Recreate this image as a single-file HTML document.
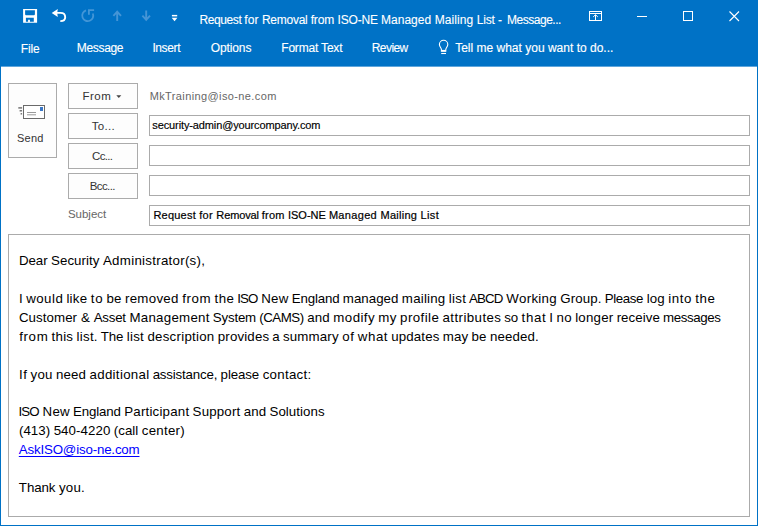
<!DOCTYPE html>
<html><head><meta charset="utf-8">
<title>Request for Removal from ISO-NE Managed Mailing List - Message</title>
<style>
html,body{margin:0;padding:0;}
body{width:758px;height:526px;overflow:hidden;background:#0072c6;position:relative;font-family:"Liberation Sans",sans-serif;}
.abs{position:absolute;}
#content{left:1px;top:67px;width:756px;height:458px;background:#fff;}
#edge{left:1px;top:66px;width:756px;height:1px;background:#5fa6dc;}
.t{position:absolute;white-space:nowrap;line-height:1;}
.btn{position:absolute;box-sizing:border-box;border:1px solid #ababab;background:#fdfdfd;}
.fld{position:absolute;box-sizing:border-box;border:1px solid #ababab;background:#fff;left:149px;width:601px;height:21px;}
</style></head><body>
<svg class="abs" style="left:0;top:0" width="758" height="66">
  <!-- save icon -->
  <path fill="#fff" fill-rule="evenodd" d="M23.100 9 H37.100 V22.700 H23.100 Z M25.100 10.200 H34.900 V14.500 L34.200 15.300 H25.800 L25.100 14.500 Z M25.900 17.800 H33.800 V21.800 H29.900 V19.700 H28.100 V21.800 H25.900 Z"/>
  <!-- undo -->
  <path d="M51.700 12.900 L57.800 8.900 L57.200 12.900 L57.800 16.900 Z" fill="#fff"/>
  <path d="M56.500 12.900 H60.500 C63.500 12.900 65.200 14.800 65.200 17.200 C65.200 19.600 63.200 21.100 60.300 21.100" fill="none" stroke="#fff" stroke-width="1.900"/>
  <!-- redo disabled -->
  <g fill="none" stroke="#4396d7" stroke-width="1.800">
    <path d="M86 10.400 A5.5 5.5 0 1 0 92.800 13.500"/>
    <path d="M88.900 14.800 V10.100 H94.100"/>
  </g>
  <!-- up / down arrows disabled -->
  <g fill="none" stroke="#4595d6" stroke-width="1.900">
    <path d="M117.2 21 V11.8 M113.4 15.8 L117.2 11.7 L121 15.8"/>
    <path d="M146.2 10.5 V19.700 M142.400 15.700 L146.2 19.800 L150 15.700"/>
  </g>
  <!-- customize -->
  <g fill="#fff">
    <rect x="171.9" y="14.9" width="5.3" height="1.5"/>
    <path d="M171.700 17.800 H177.400 L174.550 21.2 Z"/>
  </g>
  <!-- ribbon display icon -->
  <g fill="none" stroke="#fff" stroke-width="1">
    <rect x="589.5" y="11.5" width="12" height="9"/>
    <line x1="589.5" y1="13.5" x2="601.5" y2="13.5"/>
    <path d="M595.5 20.500 V15 M593.2 16.900 L595.5 14.700 L597.800 16.900"/>
  </g>
  <line x1="637" y1="16.5" x2="647" y2="16.5" stroke="#fff" stroke-width="1"/>
  <rect x="683.5" y="11.5" width="9" height="9" fill="none" stroke="#fff" stroke-width="1"/>
  <path d="M729.5 11.5 L739 21 M739 11.5 L729.5 21" stroke="#fff" stroke-width="1.100" fill="none"/>
  <!-- bulb -->
  <g fill="none" stroke="#fff" stroke-width="1.100">
    <path d="M441.400 51.2 V49.5 C441.400 48 439.400 46.800 439.400 44.5 A4.2 4.2 0 0 1 447.800 44.5 C447.800 46.800 445.800 48 445.800 49.500 V51.200 Z"/>
    <path d="M441.400 50.700 H445.800" stroke-width="1.600"/>
    <line x1="441.2" y1="53.500" x2="446" y2="53.500"/>
  </g>
</svg>
<div id="edge" class="abs"></div>
<div id="content" class="abs"></div>

<!-- Send button -->
<div class="btn" style="left:8px;top:83px;width:49px;height:75px;"></div>
<svg class="abs" style="left:8px;top:83px" width="49" height="75">
  <rect x="15.500" y="22.5" width="21" height="13" fill="#fff" stroke="#6a6a6a" stroke-width="1"/>
  <rect x="32" y="24" width="3" height="4" fill="#3a77c6"/>
  <line x1="19" y1="29.500" x2="28" y2="29.500" stroke="#9a9a9a"/>
  <line x1="19" y1="31.800" x2="28" y2="31.800" stroke="#9a9a9a"/>
  <line x1="10.300" y1="24.900" x2="14.100" y2="24.900" stroke="#6a6a6a" stroke-width="1.400"/>
  <line x1="11.600" y1="27.800" x2="14.100" y2="27.800" stroke="#6a6a6a" stroke-width="1.400"/>
  <line x1="12.600" y1="30.800" x2="14.100" y2="30.800" stroke="#6a6a6a" stroke-width="1.400"/>
</svg>

<div class="btn" style="left:68px;top:83px;width:70px;height:26px;"></div>
<div class="btn" style="left:68px;top:113px;width:70px;height:26px;"></div>
<div class="btn" style="left:68px;top:143px;width:70px;height:26px;"></div>
<div class="btn" style="left:68px;top:173px;width:70px;height:26px;"></div>
<svg class="abs" style="left:116px;top:95px" width="8" height="5"><path d="M0.300 0.200 H5.300 L2.800 2.900 Z" fill="#444"/></svg>

<div class="fld" style="top:115px;"></div>
<div class="fld" style="top:145px;"></div>
<div class="fld" style="top:175px;"></div>
<div class="fld" style="top:205px;"></div>

<!-- body -->
<div class="abs" style="left:8px;top:234px;width:742px;height:283px;box-sizing:border-box;border:1px solid #ababab;background:#fff;"></div>
<div id="tFile" class="t" style="left:20.74px;top:42.5px;font-size:12px;color:#fff;letter-spacing:-0.165px;-webkit-text-stroke:0.12px #fff;">File</div>
<div id="tMsg" class="t" style="left:76.74px;top:41.5px;font-size:12px;color:#fff;letter-spacing:-0.316px;-webkit-text-stroke:0.12px #fff;">Message</div>
<div id="tIns" class="t" style="left:152.38px;top:41.5px;font-size:12px;color:#fff;letter-spacing:-0.382px;-webkit-text-stroke:0.12px #fff;">Insert</div>
<div id="tOpt" class="t" style="left:210.68px;top:41.5px;font-size:12px;color:#fff;letter-spacing:-0.096px;-webkit-text-stroke:0.12px #fff;">Options</div>
<div id="tFmt" class="t" style="left:281.24px;top:41.5px;font-size:12px;color:#fff;letter-spacing:-0.185px;-webkit-text-stroke:0.12px #fff;">Format Text</div>
<div id="tRev" class="t" style="left:371.72px;top:41.5px;font-size:12px;color:#fff;letter-spacing:-0.559px;-webkit-text-stroke:0.12px #fff;">Review</div>
<div id="tTell" class="t" style="left:455.15px;top:41.5px;font-size:12px;color:#fff;letter-spacing:0.005px;-webkit-text-stroke:0.15px #fff;">Tell me what you want to do...</div>
<div id="send" class="t" style="left:16.92px;top:132.5px;font-size:11px;color:#333;letter-spacing:0.266px;">Send</div>
<div id="from" class="t" style="left:82.45px;top:90.5px;font-size:11.5px;color:#333;letter-spacing:0.541px;">From</div>
<div id="to" class="t" style="left:91.77px;top:120.5px;font-size:11.5px;color:#333;letter-spacing:0.285px;">To...</div>
<div id="cc" class="t" style="left:92.02px;top:150.5px;font-size:11.5px;color:#333;letter-spacing:-0.651px;">Cc...</div>
<div id="bcc" class="t" style="left:89.67px;top:180.5px;font-size:11.5px;color:#333;letter-spacing:-0.583px;">Bcc...</div>
<div id="subj" class="t" style="left:67.94px;top:209px;font-size:11.5px;color:#666;letter-spacing:-0.017px;">Subject</div>
<div id="mk" class="t" style="left:149.70px;top:90.5px;font-size:11px;color:#666;letter-spacing:0.385px;">MkTraining@iso-ne.com</div>
<div id="sec" class="t" style="left:152.37px;top:120px;font-size:11px;color:#000;letter-spacing:-0.124px;-webkit-text-stroke:0.15px #000;">security-admin@yourcompany.com</div>
<div id="title" class="t" style="left:0;top:14px;font-size:12px;color:#fff;"><span style="position:absolute;left:199.44px;top:0;letter-spacing:-0.395px;-webkit-text-stroke:0.1px #fff;">Request </span><span style="position:absolute;left:244.32px;top:0;letter-spacing:0.055px;-webkit-text-stroke:0.1px #fff;">for </span><span style="position:absolute;left:261.90px;top:0;letter-spacing:-0.245px;-webkit-text-stroke:0.1px #fff;">Removal </span><span style="position:absolute;left:310.64px;top:0;letter-spacing:-0.085px;-webkit-text-stroke:0.1px #fff;">from </span><span style="position:absolute;left:337.56px;top:0;letter-spacing:-0.188px;-webkit-text-stroke:0.1px #fff;">ISO-NE </span><span style="position:absolute;left:380.93px;top:0;letter-spacing:0.042px;-webkit-text-stroke:0.1px #fff;">Managed </span><span style="position:absolute;left:434.66px;top:0;letter-spacing:0.080px;-webkit-text-stroke:0.1px #fff;">Mailing </span><span style="position:absolute;left:476.65px;top:0;letter-spacing:-0.145px;-webkit-text-stroke:0.1px #fff;">List </span><span style="position:absolute;left:497.96px;top:0;letter-spacing:0.855px;-webkit-text-stroke:0.1px #fff;">- </span><span style="position:absolute;left:507.01px;top:0;letter-spacing:-0.475px;-webkit-text-stroke:0.1px #fff;">Message...</span></div>
<div id="subt" class="t" style="left:0;top:210px;font-size:11px;color:#000;"><span style="position:absolute;left:153.45px;top:0;letter-spacing:0.215px;-webkit-text-stroke:0.2px #000;">Request </span><span style="position:absolute;left:199.22px;top:0;letter-spacing:0.303px;-webkit-text-stroke:0.2px #000;">for </span><span style="position:absolute;left:216.34px;top:0;letter-spacing:-0.122px;-webkit-text-stroke:0.2px #000;">Removal </span><span style="position:absolute;left:261.83px;top:0;letter-spacing:0.223px;-webkit-text-stroke:0.2px #000;">from </span><span style="position:absolute;left:288.00px;top:0;letter-spacing:-0.012px;-webkit-text-stroke:0.2px #000;">ISO-NE </span><span style="position:absolute;left:328.89px;top:0;letter-spacing:0.328px;-webkit-text-stroke:0.2px #000;">Managed </span><span style="position:absolute;left:380.45px;top:0;letter-spacing:0.278px;-webkit-text-stroke:0.2px #000;">Mailing </span><span style="position:absolute;left:420.59px;top:0;letter-spacing:0.353px;-webkit-text-stroke:0.2px #000;">List</span></div>
<div id="b1" class="t body" style="left:0;top:254px;font-size:13.3px;color:#000;"><span style="position:absolute;left:18.89px;top:0;letter-spacing:-0.017px;">Dear </span><span style="position:absolute;left:51.04px;top:0;letter-spacing:0.054px;">Security </span><span style="position:absolute;left:102.98px;top:0;letter-spacing:0.278px;">Administrator(s),</span></div>
<div id="b2" class="t body" style="left:0;top:292px;font-size:13.3px;color:#000;"><span style="position:absolute;left:18.90px;top:0;letter-spacing:0.004px;">I </span><span style="position:absolute;left:26.17px;top:0;letter-spacing:0.473px;">would </span><span style="position:absolute;left:66.48px;top:0;letter-spacing:0.202px;">like </span><span style="position:absolute;left:90.86px;top:0;letter-spacing:0.797px;">to </span><span style="position:absolute;left:106.54px;top:0;letter-spacing:0.127px;">be </span><span style="position:absolute;left:124.99px;top:0;letter-spacing:0.275px;">removed </span><span style="position:absolute;left:182.16px;top:0;letter-spacing:0.631px;">from </span><span style="position:absolute;left:214.55px;top:0;letter-spacing:0.493px;">the </span><span style="position:absolute;left:237.16px;top:0;letter-spacing:-0.899px;">ISO </span><span style="position:absolute;left:261.27px;top:0;letter-spacing:0.242px;">New </span><span style="position:absolute;left:291.73px;top:0;letter-spacing:-0.155px;">England </span><span style="position:absolute;left:342.87px;top:0;letter-spacing:0.015px;">managed </span><span style="position:absolute;left:401.85px;top:0;letter-spacing:0.209px;">mailing </span><span style="position:absolute;left:448.80px;top:0;letter-spacing:0.293px;">list </span><span style="position:absolute;left:468.98px;top:0;letter-spacing:-0.885px;">ABCD </span><span style="position:absolute;left:506.32px;top:0;letter-spacing:0.310px;">Working </span><span style="position:absolute;left:560.25px;top:0;letter-spacing:0.115px;">Group. </span><span style="position:absolute;left:604.67px;top:0;letter-spacing:-0.375px;">Please </span><span style="position:absolute;left:646.66px;top:0;letter-spacing:0.104px;">log </span><span style="position:absolute;left:668.29px;top:0;letter-spacing:0.585px;">into </span><span style="position:absolute;left:695.37px;top:0;letter-spacing:0.493px;">the</span></div>
<div id="b3" class="t body" style="left:0;top:311px;font-size:13.3px;color:#000;"><span style="position:absolute;left:18.93px;top:0;letter-spacing:0.066px;">Customer </span><span style="position:absolute;left:80.97px;top:0;letter-spacing:1.152px;">&amp; </span><span style="position:absolute;left:93.64px;top:0;letter-spacing:-0.205px;">Asset </span><span style="position:absolute;left:129.44px;top:0;letter-spacing:0.268px;">Management </span><span style="position:absolute;left:212.84px;top:0;letter-spacing:-0.201px;">System </span><span style="position:absolute;left:259.17px;top:0;letter-spacing:-0.450px;">(CAMS) </span><span style="position:absolute;left:307.35px;top:0;letter-spacing:0.100px;">and </span><span style="position:absolute;left:333.32px;top:0;letter-spacing:0.426px;">modify </span><span style="position:absolute;left:378.33px;top:0;letter-spacing:0.331px;">my </span><span style="position:absolute;left:400.09px;top:0;letter-spacing:0.418px;">profile </span><span style="position:absolute;left:442.56px;top:0;letter-spacing:0.412px;">attributes </span><span style="position:absolute;left:504.36px;top:0;letter-spacing:-0.273px;">so </span><span style="position:absolute;left:521.62px;top:0;letter-spacing:0.606px;">that </span><span style="position:absolute;left:549.25px;top:0;letter-spacing:0.000px;">I </span><span style="position:absolute;left:556.45px;top:0;letter-spacing:0.339px;">no </span><span style="position:absolute;left:575.18px;top:0;letter-spacing:0.206px;">longer </span><span style="position:absolute;left:616.63px;top:0;letter-spacing:0.060px;">receive </span><span style="position:absolute;left:663.03px;top:0;letter-spacing:-0.379px;">messages</span></div>
<div id="b4" class="t body" style="left:0;top:330px;font-size:13.3px;color:#000;"><span style="position:absolute;left:19.22px;top:0;letter-spacing:0.632px;">from </span><span style="position:absolute;left:51.50px;top:0;letter-spacing:0.273px;">this </span><span style="position:absolute;left:76.61px;top:0;letter-spacing:0.240px;">list. </span><span style="position:absolute;left:100.86px;top:0;letter-spacing:-0.232px;">The </span><span style="position:absolute;left:126.67px;top:0;letter-spacing:0.294px;">list </span><span style="position:absolute;left:147.42px;top:0;letter-spacing:0.251px;">description </span><span style="position:absolute;left:217.77px;top:0;letter-spacing:0.149px;">provides </span><span style="position:absolute;left:272.30px;top:0;letter-spacing:-0.357px;">a </span><span style="position:absolute;left:282.94px;top:0;letter-spacing:0.167px;">summary </span><span style="position:absolute;left:342.32px;top:0;letter-spacing:0.579px;">of </span><span style="position:absolute;left:357.87px;top:0;letter-spacing:0.534px;">what </span><span style="position:absolute;left:391.23px;top:0;letter-spacing:0.132px;">updates </span><span style="position:absolute;left:442.80px;top:0;letter-spacing:0.114px;">may </span><span style="position:absolute;left:471.60px;top:0;letter-spacing:0.129px;">be </span><span style="position:absolute;left:489.98px;top:0;letter-spacing:0.114px;">needed.</span></div>
<div id="b5" class="t body" style="left:0;top:368px;font-size:13.3px;color:#000;"><span style="position:absolute;left:19.10px;top:0;letter-spacing:0.403px;">If </span><span style="position:absolute;left:30.54px;top:0;letter-spacing:0.231px;">you </span><span style="position:absolute;left:55.96px;top:0;letter-spacing:0.126px;">need </span><span style="position:absolute;left:89.47px;top:0;letter-spacing:0.316px;">additional </span><span style="position:absolute;left:152.65px;top:0;letter-spacing:-0.176px;">assistance, </span><span style="position:absolute;left:220.61px;top:0;letter-spacing:-0.107px;">please </span><span style="position:absolute;left:262.67px;top:0;letter-spacing:0.274px;">contact:</span></div>
<div id="b6" class="t body" style="left:0;top:405px;font-size:13.3px;color:#000;"><span style="position:absolute;left:18.45px;top:0;letter-spacing:-0.901px;">ISO </span><span style="position:absolute;left:42.55px;top:0;letter-spacing:0.239px;">New </span><span style="position:absolute;left:73.00px;top:0;letter-spacing:-0.158px;">England </span><span style="position:absolute;left:124.22px;top:0;letter-spacing:0.206px;">Participant </span><span style="position:absolute;left:192.62px;top:0;letter-spacing:0.168px;">Support </span><span style="position:absolute;left:243.67px;top:0;letter-spacing:0.105px;">and </span><span style="position:absolute;left:269.47px;top:0;letter-spacing:0.050px;">Solutions</span></div>
<div id="b7" class="t body" style="left:0;top:424px;font-size:13.3px;color:#000;"><span style="position:absolute;left:18.93px;top:0;letter-spacing:0.062px;">(413) </span><span style="position:absolute;left:53.63px;top:0;letter-spacing:0.077px;">540-4220 </span><span style="position:absolute;left:113.75px;top:0;letter-spacing:0.028px;">(call </span><span style="position:absolute;left:141.73px;top:0;letter-spacing:0.258px;">center)</span></div>
<div id="b8" class="t body" style="left:0;top:443px;font-size:13.3px;color:#0000ff;"><span style="position:absolute;left:18.81px;top:0;letter-spacing:-0.171px;text-decoration:underline;text-underline-offset:1.5px;text-decoration-thickness:1px;">AskISO@iso-ne.com</span></div>
<div id="b9" class="t body" style="left:0;top:481px;font-size:13.3px;color:#000;"><span style="position:absolute;left:18.86px;top:0;letter-spacing:-0.082px;">Thank </span><span style="position:absolute;left:58.91px;top:0;letter-spacing:0.215px;">you.</span></div>
</body></html>
